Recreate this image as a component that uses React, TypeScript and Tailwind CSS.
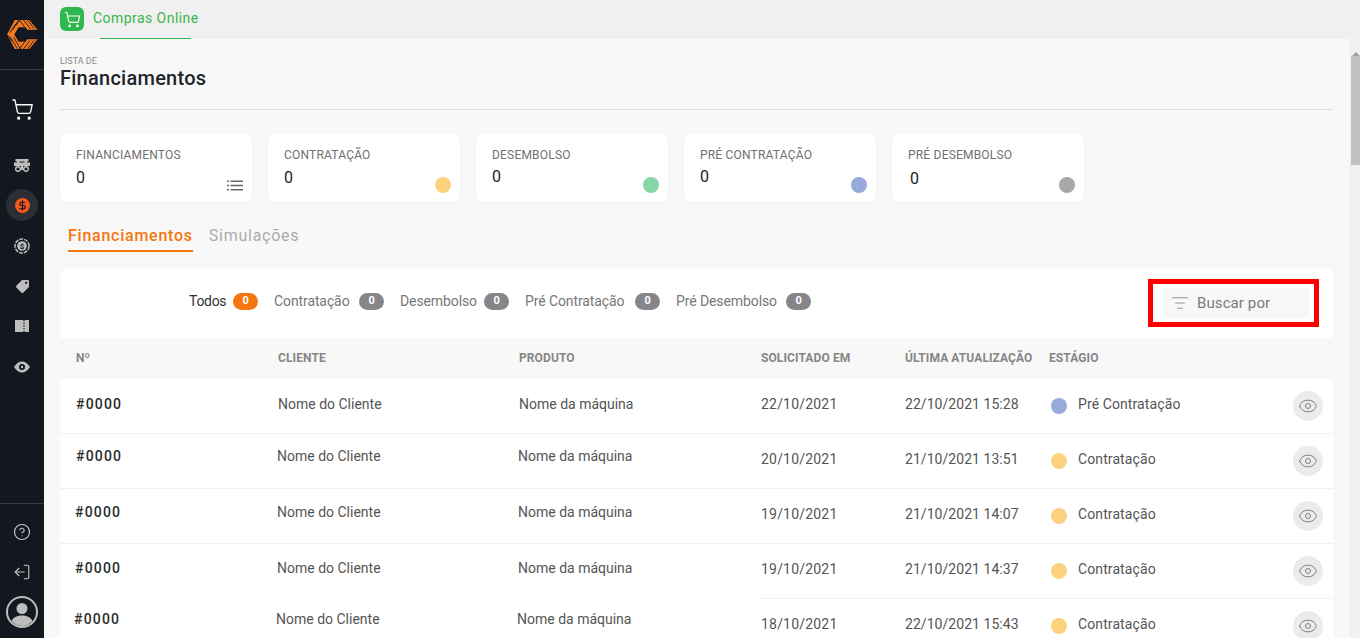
import React from 'react';
import { Eye, CircleHelp, ListFilter, LogOut, ShoppingCart, DollarSign } from 'lucide-react';
import { FaTag } from 'react-icons/fa';

const Logo = () => (
  <svg width="31" height="29" viewBox="0 0 32 30">
    <path d="M8 0h15l8.500 10H21l-2-2.500h-7L7.500 15l4.500 7.500h7l2-2.500h10.500L23 30H8L0 15z" fill="#f47a20" />
    <path d="M6 10L12 0M9 6L13 0M3 13L9 4M17 0l7 9M21 0l7 9M13 0l5 7M7 18l7 12M3 17l8 13M0 15l5 7M17 30l7-9M21 30l7-9M13 30l5-7" stroke="#13171f" strokeWidth="0.9" />
  </svg>
);

const MachineIcon = () => (
  <svg width="16" height="13" viewBox="0 0 16 13" fill="#bdbdbd">
    <path d="M1.500 0h13v2.500h-13zM0 3.500h16V7H0z" />
    <rect x="3" y="1" width="2.500" height="3" />
    <rect x="10.500" y="1" width="2.500" height="3" />
    <circle cx="4" cy="10" r="2.300" fill="none" stroke="#bdbdbd" strokeWidth="1.500" />
    <circle cx="12" cy="10" r="2.300" fill="none" stroke="#bdbdbd" strokeWidth="1.500" />
    <rect x="7" y="6" width="2" height="5" />
  </svg>
);

const CoinIcon = () => (
  <svg width="16" height="16" viewBox="0 0 16 16" fill="none">
    <circle cx="8" cy="8" r="7" stroke="#bdbdbd" strokeWidth="1.500" strokeDasharray="4 1" />
    <circle cx="8" cy="8" r="4.800" fill="#bdbdbd" />
    <text x="8" y="10.800" textAnchor="middle" fontSize="8" fontWeight="700" fill="#13171f" fontFamily="Roboto, sans-serif">$</text>
  </svg>
);

const TicketIcon = () => (
  <svg width="14" height="12" viewBox="0 0 14 12">
    <path d="M0 0h8a1 1 0 0 0 2 0h4v12h-4a1 1 0 0 0-2 0H0z" fill="#bdbdbd" />
    <path d="M9 2.500v7.500" stroke="#13171f" strokeWidth="1" strokeDasharray="1.500 1.200" />
  </svg>
);

const EyeMoneyIcon = () => (
  <svg width="16" height="12" viewBox="0 0 16 12">
    <path d="M0 6c2-3.500 5-5.500 8-5.500S14 2.500 16 6c-2 3.500-5 5.500-8 5.500S2 9.500 0 6z" fill="#bdbdbd" />
    <circle cx="8" cy="6" r="3" fill="#13171f" />
    <circle cx="8" cy="6" r="1.200" fill="#bdbdbd" />
  </svg>
);

const ListIcon = () => (
  <svg width="16" height="11" viewBox="0 0 16 11" fill="#666666">
    <rect x="0" y="0.500" width="2" height="1.500" />
    <rect x="0" y="4.750" width="2" height="1.500" />
    <rect x="0" y="9" width="2" height="1.500" />
    <rect x="3.500" y="0.500" width="12.500" height="1.500" />
    <rect x="3.500" y="4.750" width="12.500" height="1.500" />
    <rect x="3.500" y="9" width="12.500" height="1.500" />
  </svg>
);

const Avatar = () => (
  <svg width="32" height="32" viewBox="0 0 32 32">
    <circle cx="16" cy="16" r="15" fill="none" stroke="#bdbdbd" strokeWidth="2" />
    <circle cx="16" cy="12.500" r="5.500" fill="#bdbdbd" />
    <path d="M5.500 25c2-4 6-5.500 10.500-5.500S24.500 21 26.500 25c-2.500 3-6.500 5-10.500 5s-8-2-10.500-5z" fill="#bdbdbd" />
  </svg>
);

const Sidebar = () => (
  <aside className="w-[44px] h-[638px] shrink-0 bg-[#13171f] flex flex-col items-center">
    <div className="h-[70px] w-full shrink-0 flex items-center justify-center border-b border-[#3a3d40]">
      <Logo />
    </div>
    <div className="mt-[28px] h-[22px] flex items-center">
      <ShoppingCart size={23} strokeWidth={1.4} className="text-white" />
    </div>
    <div className="mt-[35px] h-[20px] flex items-center"><MachineIcon /></div>
    <div className="mt-[14px] w-[32px] h-[32px] rounded-full bg-[#2b2e33] flex items-center justify-center">
      <div className="w-[15px] h-[15px] rounded-full bg-[#f4581f] flex items-center justify-center">
        <DollarSign size={11} strokeWidth={2.5} className="text-[#13171f]" />
      </div>
    </div>
    <div className="mt-[15px] h-[20px] flex items-center"><CoinIcon /></div>
    <div className="mt-[20px] h-[20px] flex items-center"><FaTag size={13} className="text-[#bdbdbd] -scale-x-100" /></div>
    <div className="mt-[20px] h-[20px] flex items-center"><TicketIcon /></div>
    <div className="mt-[21px] h-[20px] flex items-center"><EyeMoneyIcon /></div>
    <div className="mt-auto w-full border-t border-[#3a3d40] flex flex-col items-center pt-[19px] pb-[10px]">
      <CircleHelp size={18} strokeWidth={1.6} className="text-[#c4c4c4]" />
      <LogOut size={18} strokeWidth={1.5} className="text-[#c4c4c4] mt-[22px] -scale-x-100" />
      <div className="mt-[15px] h-[32px]"><Avatar /></div>
    </div>
  </aside>
);

const cards = [
  { label: 'FINANCIAMENTOS', dot: '', value: 'mt-[5px]' },
  { label: 'CONTRATAÇÃO', dot: 'bg-[#fdd27e]', value: 'mt-[5px]' },
  { label: 'DESEMBOLSO', dot: 'bg-[#86d9a6]', value: 'mt-[4px]' },
  { label: 'PRÉ CONTRATAÇÃO', dot: 'bg-[#98aad9]', value: 'mt-[4px]' },
  { label: 'PRÉ DESEMBOLSO', dot: 'bg-[#a8a8a8]', value: 'mt-[6px] ml-[2px]' },
];

const filters = [
  { label: 'Contratação', width: 'w-[77px]' },
  { label: 'Desembolso', width: 'w-[76px]' },
  { label: 'Pré Contratação', width: 'w-[102px]' },
  { label: 'Pré Desembolso', width: 'w-[102px]' },
];

const stages: Record<string, string> = {
  'Pré Contratação': 'bg-[#98aad9]',
  'Contratação': 'bg-[#fdd27e]',
};

const rows = [
  { date: '22/10/2021', updated: '22/10/2021 15:28', stage: 'Pré Contratação', left: 'pl-[16px] pb-[4px] border-t-0', col: 'w-[202px]', h: 'h-[54px]' },
  { date: '20/10/2021', updated: '21/10/2021 13:51', stage: 'Contratação', left: 'pl-[16px] pb-[9px] border-t', col: 'w-[201px]', h: 'h-[55px]' },
  { date: '19/10/2021', updated: '21/10/2021 14:07', stage: 'Contratação', left: 'pl-[15px] pb-[7px] border-t', col: 'w-[202px]', h: 'h-[55px]' },
  { date: '19/10/2021', updated: '21/10/2021 14:37', stage: 'Contratação', left: 'pl-[15px] pb-[5px] border-t', col: 'w-[202px]', h: 'h-[55px]' },
  { date: '18/10/2021', updated: '22/10/2021 15:43', stage: 'Contratação', left: 'pl-[14px] pb-[13px] border-t-0', col: 'w-[202px]', h: 'h-[55px]' },
];

const App = () => {
  return (
    <div className="h-[638px] w-[1360px] overflow-hidden flex bg-[#f8f8f8] font-['Roboto',sans-serif]">
      <Sidebar />
      <div className="flex-1 min-w-0 flex flex-col">
        {/* Top tab bar */}
        <div className="h-[39px] shrink-0 bg-[#f0f0f0] flex items-start pl-[16px]">
          <div className="mt-[7px] w-[24px] h-[24px] rounded-[6px] bg-[#2fb84d] flex items-center justify-center">
            <ShoppingCart size={17} strokeWidth={1.6} className="text-white" />
          </div>
          <div className="ml-[16px] w-[91px] h-[39px] border-b border-[#2fb84d] whitespace-nowrap">
            <span className="block -ml-[7px] mt-[8px] text-[14px] leading-[20px] tracking-[0.45px] text-[#3cb64a]">Compras Online</span>
          </div>
        </div>

        <div className="flex-1 min-h-0 flex">
          <main className="w-[1305px] shrink-0 pl-[16px] pr-[16px]">
            {/* Title */}
            <div className="h-[71px] border-b border-[#dcdcdc] pt-[17px]">
              <p className="text-[9px] leading-[10px] text-[#888888]">LISTA DE</p>
              <h1 className="text-[20px] leading-[24px] tracking-[0.25px] font-medium text-[#20242a]">Financiamentos</h1>
            </div>

            {/* Summary cards */}
            <div className="mt-[24px] flex gap-[16px]">
              {cards.map(card => (
                <div key={card.label} className="w-[192px] h-[68px] bg-white rounded-[8px] shadow-[0_1px_3px_rgba(0,0,0,0.05)] pl-[16px] pt-[13px] flex flex-col relative">
                  <span className="text-[12px] leading-[16px] tracking-[0.2px] text-[#6f6f6f]">{card.label}</span>
                  <span className={`text-[16px] leading-[20px] text-[#222222] ${card.value}`}>0</span>
                  {card.dot ? (
                    <span className={`absolute right-[9px] bottom-[9px] w-[16px] h-[16px] rounded-full ${card.dot}`}></span>
                  ) : (
                    <span className="absolute right-[9px] bottom-[11px] flex"><ListIcon /></span>
                  )}
                </div>
              ))}
            </div>

            {/* Tabs */}
            <div className="mt-[22px] pl-[8px] flex gap-[16px] h-[28px]">
              <span className="h-[28px] border-b-2 border-[#f5760f] text-[16px] leading-[24px] font-medium tracking-[0.75px] text-[#f5760f]">Financiamentos</span>
              <span className="text-[16px] leading-[24px] tracking-[0.75px] text-[#ababab]">Simulações</span>
            </div>

            {/* Table card */}
            <div className="mt-[16px] bg-white rounded-t-[8px]">
              <div className="h-[70px] flex items-start">
                <div className="ml-[129px] mt-[25px] flex items-center h-[17px] text-[14px] tracking-[-0.3px] text-[#333333]">
                  <span className="w-[44px]">Todos</span>
                  <span className="w-[25px] h-[17px] rounded-full bg-[#f5760f] text-white text-[11px] font-bold flex items-center justify-center">0</span>
                </div>
                {filters.map(f => (
                  <div key={f.label} className="ml-[16px] mt-[25px] flex items-center gap-[8px] h-[17px] text-[14px] tracking-[-0.1px] text-[#777777]">
                    <span className={`${f.width} whitespace-nowrap`}>{f.label}</span>
                    <span className="w-[25px] h-[17px] rounded-full bg-[#85858a] text-white text-[11px] font-bold flex items-center justify-center">0</span>
                  </div>
                ))}
                <div className="ml-auto mr-[14px] mt-[11px] w-[171px] h-[48px] border-[5px] border-[#ff0000] pl-[10px] pr-[5px] pt-[4px]">
                  <div className="h-[30px] rounded-[3px] bg-[#f7f7f7] flex items-center pl-[8px]">
                    <ListFilter size={18} strokeWidth={1.2} className="text-[#888888]" />
                    <span className="ml-[8px] pt-[1px] text-[15px] tracking-[0.1px] text-[#7a7a7a]">Buscar por</span>
                  </div>
                </div>
              </div>

              {/* Table header */}
              <div className="h-[41px] bg-[#f8f8f8] flex items-center pl-[16px] pb-[2px] text-[12px] font-bold tracking-[0.1px] text-[#868686]">
                <span className="w-[202px]">Nº</span>
                <span className="w-[241px]">CLIENTE</span>
                <span className="w-[242px]">PRODUTO</span>
                <span className="w-[144px]">SOLICITADO EM</span>
                <span className="w-[144px] whitespace-nowrap">ÚLTIMA ATUALIZAÇÃO</span>
                <span>ESTÁGIO</span>
              </div>

              {/* Rows */}
              {rows.map((row, index) => (
                <div key={index} className={`flex ${row.h}`}>
                  <div className={`w-[697px] flex items-center border-[#f1f1f1] text-[14px] text-[#555555] ${row.left}`}>
                    <span className={`${row.col} text-[14px] font-medium tracking-[1.2px] text-[#2b2b2b]`}>#0000</span>
                    <span className="w-[241px]">Nome do Cliente</span>
                    <span>Nome da máquina</span>
                  </div>
                  <div className={`flex-1 flex items-center pl-[4px] pr-[10px] border-[#f1f1f1] text-[14px] text-[#555555] ${index === 0 ? '' : 'border-t'}`}>
                    <span className="w-[144px] pb-[3px] tracking-[0.2px]">{row.date}</span>
                    <span className="w-[146px] pb-[3px] tracking-[0.05px]">{row.updated}</span>
                    <span className={`w-[16px] h-[16px] rounded-full ${stages[row.stage]}`}></span>
                    <span className="ml-[11px] pb-[3px] tracking-[0.1px]">{row.stage}</span>
                    <button className="ml-auto w-[30px] h-[30px] rounded-full bg-[#ebebeb] flex items-center justify-center">
                      <Eye size={20} strokeWidth={1.2} className="text-[#808080]" />
                    </button>
                  </div>
                </div>
              ))}
            </div>
          </main>

          {/* Scrollbar */}
          <div className="flex-1 bg-[#f1f1f1] flex flex-col items-end">
            <div className="h-[17px] w-[9px] flex items-end justify-center">
              <span className="w-0 h-0 border-x-[4px] border-x-transparent border-b-[4px] border-b-[#a3a3a3]"></span>
            </div>
            <div className="w-[9px] h-[109px] bg-[#c1c1c1]"></div>
          </div>
        </div>
      </div>
    </div>
  );
};

export default App;
